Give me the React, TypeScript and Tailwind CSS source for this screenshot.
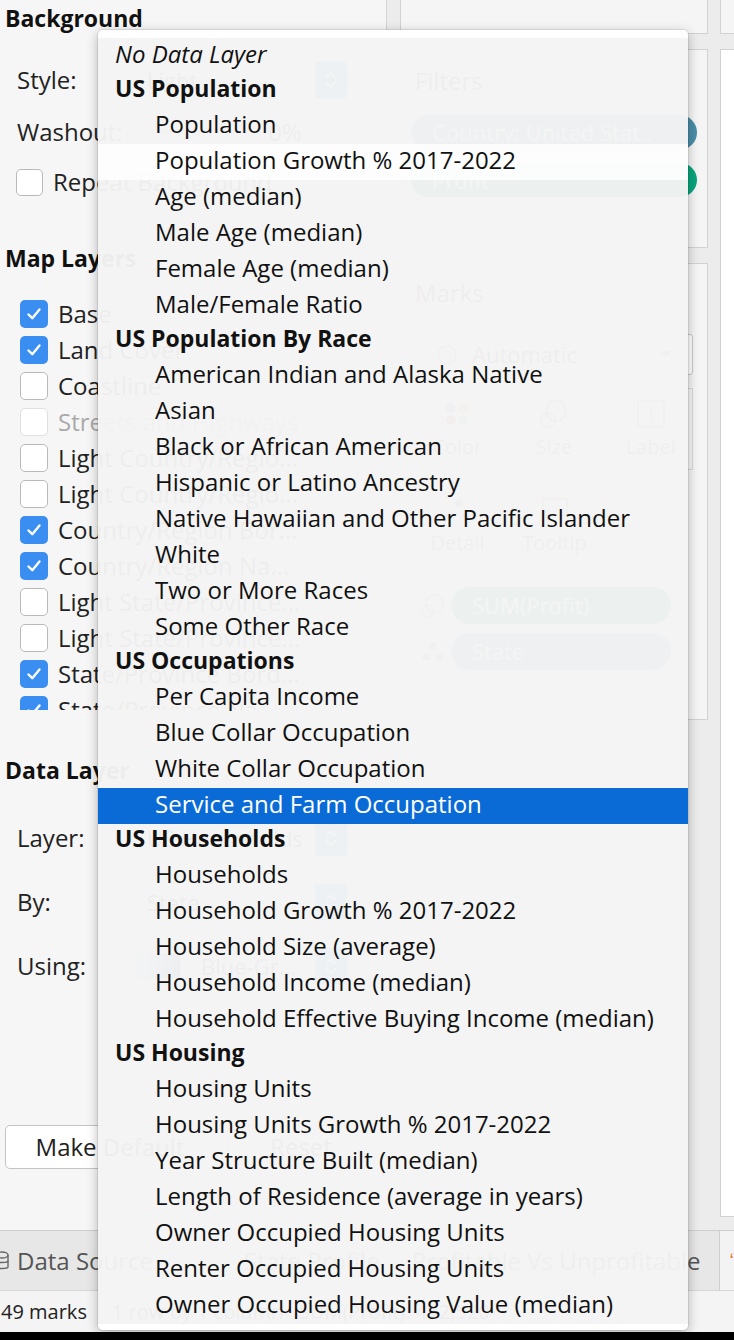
import React from "react";

type Row = { t: string; k: "none" | "h" | "i"; hl?: boolean; hover?: boolean };

const rows: Row[] = [
  { t: "No Data Layer", k: "none" },
  { t: "US Population", k: "h" },
  { t: "Population", k: "i" },
  { t: "Population Growth % 2017-2022", k: "i", hover: true },
  { t: "Age (median)", k: "i" },
  { t: "Male Age (median)", k: "i" },
  { t: "Female Age (median)", k: "i" },
  { t: "Male/Female Ratio", k: "i" },
  { t: "US Population By Race", k: "h" },
  { t: "American Indian and Alaska Native", k: "i" },
  { t: "Asian", k: "i" },
  { t: "Black or African American", k: "i" },
  { t: "Hispanic or Latino Ancestry", k: "i" },
  { t: "Native Hawaiian and Other Pacific Islander", k: "i" },
  { t: "White", k: "i" },
  { t: "Two or More Races", k: "i" },
  { t: "Some Other Race", k: "i" },
  { t: "US Occupations", k: "h" },
  { t: "Per Capita Income", k: "i" },
  { t: "Blue Collar Occupation", k: "i" },
  { t: "White Collar Occupation", k: "i" },
  { t: "Service and Farm Occupation", k: "i", hl: true },
  { t: "US Households", k: "h" },
  { t: "Households", k: "i" },
  { t: "Household Growth % 2017-2022", k: "i" },
  { t: "Household Size (average)", k: "i" },
  { t: "Household Income (median)", k: "i" },
  { t: "Household Effective Buying Income (median)", k: "i" },
  { t: "US Housing", k: "h" },
  { t: "Housing Units", k: "i" },
  { t: "Housing Units Growth % 2017-2022", k: "i" },
  { t: "Year Structure Built (median)", k: "i" },
  { t: "Length of Residence (average in years)", k: "i" },
  { t: "Owner Occupied Housing Units", k: "i" },
  { t: "Renter Occupied Housing Units", k: "i" },
  { t: "Owner Occupied Housing Value (median)", k: "i" },
];

const layers: { t: string; c: boolean; d?: boolean }[] = [
  { t: "Base", c: true },
  { t: "Land Cover", c: true },
  { t: "Coastline", c: false },
  { t: "Streets and Highways", c: false, d: true },
  { t: "Light Country/Regio...", c: false },
  { t: "Light Country/Regio...", c: false },
  { t: "Country/Region Bor...", c: true },
  { t: "Country/Region Na...", c: true },
  { t: "Light State/Province...", c: false },
  { t: "Light State/Province...", c: false },
  { t: "State/Province Bord...", c: true },
  { t: "State/Province Na...", c: true },
];

function Checkbox({ checked, disabled, size = 28 }: { checked: boolean; disabled?: boolean; size?: number }) {
  if (checked) {
    return (
      <div
        className="shrink-0 rounded-[5px] bg-[#3a8ef2] flex items-center justify-center"
        style={{ width: size, height: size }}
      >
        <svg width="18" height="18" viewBox="0 0 18 18" fill="none">
          <path d="M3.5 9.5 L7.3 13.2 L14.5 4.5" stroke="white" strokeWidth="2.4" strokeLinecap="round" strokeLinejoin="round" />
        </svg>
      </div>
    );
  }
  return (
    <div
      className={`shrink-0 rounded-[5px] bg-white border ${disabled ? "border-[#e0e0e0] bg-[#fafafa]" : "border-[#b9b9b9]"}`}
      style={{ width: size, height: size }}
    />
  );
}

function Popup({ text, swatch }: { text: string; swatch?: boolean }) {
  return (
    <div className="w-[220px] h-[38px] flex rounded-[5px] border border-[#c9c9c9] bg-white overflow-hidden">
      <div className="flex-1 min-w-0 flex items-center pl-[8px] gap-[10px] text-[22px] text-[#222] overflow-hidden whitespace-nowrap">
        {swatch ? (
          <div className="w-[44px] h-[26px] shrink-0 border border-[#bbb] bg-gradient-to-r from-[#dbe9f6] to-[#1f5a9e]" />
        ) : null}
        <span className="pl-[10px] truncate">{text}</span>
      </div>
      <div className="w-[32px] shrink-0 bg-[#3d8ff5] flex items-center justify-center">
        <svg width="12" height="22" viewBox="0 0 12 22" fill="none">
          <path d="M2 8 L6 4 L10 8" stroke="white" strokeWidth="2" strokeLinecap="round" strokeLinejoin="round" />
          <path d="M2 14 L6 18 L10 14" stroke="white" strokeWidth="2" strokeLinecap="round" strokeLinejoin="round" />
        </svg>
      </div>
    </div>
  );
}

function SettingRow({ label, children }: { label: string; children: React.ReactNode }) {
  return (
    <div className="h-[40px] flex items-center pl-[17px] shrink-0">
      <div className="w-[111px] shrink-0 text-[24px] text-[#222] leading-[40px]">{label}</div>
      {children}
    </div>
  );
}

function LeftPanel() {
  return (
    <div className="w-[387px] shrink-0 bg-[#f6f6f6] border-r border-[#d4d4d4] flex flex-col">
      <div className="h-[36px] pl-[5px] text-[23px] font-bold leading-[36px] text-[#111] shrink-0">Background</div>
      <div className="h-[24px] shrink-0" />
      <SettingRow label="Style:">
        <Popup text="Light" />
      </SettingRow>
      <div className="h-[12px] shrink-0" />
      <SettingRow label="Washout:">
        <div className="w-[120px] h-[4px] rounded-full bg-[#c9c9c9] relative">
          <div className="absolute -left-[2px] -top-[9px] w-[22px] h-[22px] rounded-full bg-white border border-[#bdbdbd]" />
        </div>
        <div className="ml-[20px] text-[24px] text-[#222]">0%</div>
      </SettingRow>
      <div className="h-[16px] shrink-0" />
      <div className="h-[28px] flex items-center pl-[16px] gap-[10px] shrink-0">
        <Checkbox checked={false} size={27} />
        <span className="text-[24px] text-[#222] whitespace-nowrap">Repeat Background</span>
      </div>
      <div className="h-[44px] shrink-0" />
      <div className="h-[36px] pl-[5px] text-[23px] font-bold leading-[36px] text-[#111] shrink-0">Map Layers</div>
      <div className="h-[20px] shrink-0" />
      <div className="h-[414px] overflow-hidden shrink-0">
        {layers.map((l, i) => (
          <div key={i} className="h-[36px] flex items-center pl-[20px] gap-[10px]">
            <Checkbox checked={l.c} disabled={l.d} />
            <span className={`text-[24px] whitespace-nowrap ${l.d ? "text-[#a9a9a9]" : "text-[#222]"}`}>{l.t}</span>
          </div>
        ))}
      </div>
      <div className="h-[42px] shrink-0" />
      <div className="h-[36px] pl-[5px] text-[23px] font-bold leading-[36px] text-[#111] shrink-0">Data Layer</div>
      <div className="h-[30px] shrink-0" />
      <SettingRow label="Layer:">
        <Popup text="US Households" />
      </SettingRow>
      <div className="h-[24px] shrink-0" />
      <SettingRow label="By:">
        <Popup text="State" />
      </SettingRow>
      <div className="h-[24px] shrink-0" />
      <SettingRow label="Using:">
        <Popup text="Blue-Gr..." swatch />
      </SettingRow>
      <div className="h-[139px] shrink-0" />
      <div className="h-[44px] flex pl-[5px] gap-[12px] shrink-0">
        <div className="w-[210px] h-[44px] rounded-[5px] border border-[#c4c4c4] bg-white flex items-center justify-center text-[24px] text-[#222]">
          Make Default
        </div>
        <div className="w-[148px] h-[44px] rounded-[5px] border border-[#c4c4c4] bg-white flex items-center justify-center text-[24px] text-[#222]">
          Reset
        </div>
      </div>
    </div>
  );
}

function Pill({ text, color }: { text: string; color: string }) {
  return (
    <div className={`h-full rounded-full ${color} flex items-center pl-[21px] text-[22px] text-white whitespace-nowrap overflow-hidden`}>
      {text}
    </div>
  );
}

function MarkButton({ label, icon }: { label: string; icon: React.ReactNode }) {
  return (
    <div className="w-[85px] h-full border border-[#dadada] bg-[#f7f7f7] flex flex-col items-center justify-center gap-[4px]">
      <div className="h-[32px] flex items-center justify-center">{icon}</div>
      <div className="text-[20px] text-[#555] leading-[26px]">{label}</div>
    </div>
  );
}

function SizeIcon({ s = 30 }: { s?: number }) {
  return (
    <svg width={s} height={s} viewBox="0 0 30 30">
      <circle cx="17" cy="12" r="10" fill="none" stroke="#777" strokeWidth="1.5" />
      <circle cx="9" cy="21" r="7" fill="none" stroke="#777" strokeWidth="1.5" />
    </svg>
  );
}

function DetailIcon({ s = 28 }: { s?: number }) {
  return (
    <svg width={s} height={s} viewBox="0 0 28 28">
      <circle cx="14" cy="7" r="4" fill="#777" />
      <circle cx="6" cy="20" r="4" fill="#777" />
      <circle cx="22" cy="20" r="4" fill="#777" />
    </svg>
  );
}

function MiddleColumn() {
  return (
    <div className="w-[308px] shrink-0 flex flex-col">
      <div className="h-[34px] shrink-0 bg-[#f5f5f5] border-x border-b border-[#d2d2d2]" />
      <div className="h-[15px] shrink-0" />
      <div className="h-[199px] shrink-0 bg-[#f5f5f5] border border-[#d2d2d2] px-[10px] flex flex-col">
        <div className="h-[30px] mt-[16px] pl-[4px] text-[24px] leading-[30px] text-[#333]">Filters</div>
        <div className="h-[19px]" />
        <div className="h-[35px]">
          <Pill text="Country: United Stat.." color="bg-[#4a8da8]" />
        </div>
        <div className="h-[13px]" />
        <div className="h-[34px]">
          <Pill text="Profit" color="bg-[#07a57c]" />
        </div>
      </div>
      <div className="h-[15px] shrink-0" />
      <div className="h-[457px] shrink-0 bg-[#f5f5f5] border border-[#d2d2d2] px-[14px] flex flex-col">
        <div className="h-[30px] mt-[14px] text-[24px] leading-[30px] text-[#333]">Marks</div>
        <div className="h-[26px]" />
        <div className="h-[41px] border border-[#c8c8c8] rounded-[3px] bg-white flex items-center px-[20px] gap-[14px]">
          <svg width="22" height="22" viewBox="0 0 22 22"><circle cx="11" cy="11" r="9" fill="none" stroke="#777" strokeWidth="1.5" /></svg>
          <span className="flex-1 text-[22px] text-[#333]">Automatic</span>
          <svg width="12" height="8" viewBox="0 0 12 8"><path d="M0 0 L12 0 L6 7 Z" fill="#777" /></svg>
        </div>
        <div className="h-[13px]" />
        <div className="h-[82px] flex gap-[12px]">
          <MarkButton
            label="Color"
            icon={
              <svg width="26" height="26" viewBox="0 0 26 26">
                <circle cx="7" cy="7" r="5" fill="#4e79a7" />
                <circle cx="19" cy="7" r="5" fill="#f28e2b" />
                <circle cx="7" cy="19" r="5" fill="#e15759" />
                <circle cx="19" cy="19" r="5" fill="#76b7b2" />
              </svg>
            }
          />
          <MarkButton label="Size" icon={<SizeIcon />} />
          <MarkButton
            label="Label"
            icon={
              <svg width="28" height="28" viewBox="0 0 28 28">
                <rect x="1" y="1" width="26" height="26" fill="none" stroke="#777" strokeWidth="1.5" />
                <text x="14" y="20" textAnchor="middle" fontSize="16" fill="#777" fontFamily="Liberation Serif, serif">T</text>
              </svg>
            }
          />
        </div>
        <div className="h-[15px]" />
        <div className="h-[80px] flex gap-[12px]">
          <MarkButton label="Detail" icon={<DetailIcon />} />
          <MarkButton
            label="Tooltip"
            icon={
              <svg width="28" height="26" viewBox="0 0 28 26">
                <path d="M2 2 H26 V18 H12 L6 24 V18 H2 Z" fill="none" stroke="#777" strokeWidth="1.5" />
              </svg>
            }
          />
        </div>
        <div className="h-[22px]" />
        <div className="h-[37px] flex items-center">
          <div className="w-[36px] flex justify-center">
            <SizeIcon s={26} />
          </div>
          <div className="w-[220px] h-full">
            <Pill text="SUM(Profit)" color="bg-[#07a57c]" />
          </div>
        </div>
        <div className="h-[9px]" />
        <div className="h-[37px] flex items-center">
          <div className="w-[36px] flex justify-center">
            <DetailIcon s={24} />
          </div>
          <div className="w-[220px] h-full">
            <Pill text="State" color="bg-[#4a8da8]" />
          </div>
        </div>
      </div>
    </div>
  );
}

function RightColumn() {
  return (
    <div className="flex-1 flex flex-col">
      <div className="h-[34px] shrink-0 bg-[#f5f5f5] border-l border-b border-[#d2d2d2]" />
      <div className="h-[15px] shrink-0" />
      <div className="h-[1168px] shrink-0 bg-white border-l border-y border-[#d2d2d2]" />
    </div>
  );
}

function TabBar() {
  return (
    <div className="h-[60px] shrink-0 bg-[#e7e7e7] border-t border-[#cfcfcf] flex">
      <div className="w-[228px] shrink-0 flex items-center border-r border-[#d0d0d0] relative">
        <svg className="absolute -left-[5px] top-[20px]" width="14" height="20" viewBox="0 0 14 20" fill="none">
          <ellipse cx="7" cy="4" rx="6" ry="3" stroke="#666" strokeWidth="1.4" />
          <path d="M1 4 V16 C1 18 13 18 13 16 V4" stroke="#666" strokeWidth="1.4" />
          <path d="M1 10 C1 12 13 12 13 10" stroke="#666" strokeWidth="1.4" />
        </svg>
        <span className="pl-[17px] text-[24px] text-[#555] whitespace-nowrap">Data Source</span>
      </div>
      <div className="w-[172px] shrink-0 flex items-center border-r border-[#d0d0d0] pl-[16px] text-[24px] text-[#555] whitespace-nowrap overflow-hidden">
        State Profile
      </div>
      <div className="w-[320px] shrink-0 flex items-center border-r border-[#cfcfcf] pl-[12px] text-[24px] text-[#555] whitespace-nowrap overflow-hidden">
        Profitable Vs Unprofitable
      </div>
      <div className="flex-1 bg-[#f3f3f3] flex items-center justify-end">
        <span className="text-[20px] text-[#e8762c] leading-none">ʻ</span>
      </div>
    </div>
  );
}

function StatusBar() {
  return (
    <div className="h-[42px] shrink-0 bg-[#f4f4f4] border-t border-[#d6d6d6] flex items-center text-[20px] text-[#222] whitespace-nowrap">
      <span className="pl-[1px] w-[112px] shrink-0">49 marks</span>
      <span>1 row by 1 column&nbsp;&nbsp;&nbsp;SUM(Profit): 412,520</span>
    </div>
  );
}

function Menu() {
  return (
    <div className="absolute left-[98px] top-[30px] w-[590px] flex flex-col rounded-[5px] overflow-hidden shadow-[0_0_0_1px_rgba(0,0,0,0.07),0_3px_12px_rgba(0,0,0,0.28)]">
      <div className="h-[8px] bg-white" />
      <div className="bg-[#f4f4f4]/[0.97] flex flex-col">
        {rows.map((r, i) => {
          if (r.k === "none") {
            return (
              <div key={i} className="h-[36px] pl-[17px] text-[24px] italic leading-[31px] text-[#111] whitespace-nowrap">
                {r.t}
              </div>
            );
          }
          if (r.k === "h") {
            return (
              <div key={i} className="h-[34px] pl-[17px] text-[23px] font-bold leading-[29px] text-[#111] whitespace-nowrap">
                {r.t}
              </div>
            );
          }
          return (
            <div
              key={i}
              className={`h-[36px] pl-[57px] text-[24px] leading-[31px] whitespace-nowrap ${
                r.hl ? "bg-[#0a6bd7] text-white" : r.hover ? "bg-white/80 text-[#111]" : "text-[#111]"
              }`}
            >
              {r.t}
            </div>
          );
        })}
      </div>
      <div className="h-[6px] bg-white" />
    </div>
  );
}

export default function App() {
  return (
    <div className="relative w-[734px] h-[1340px] overflow-hidden bg-[#ececec] font-['Open_Sans',sans-serif] flex flex-col">
      <div className="flex h-[1230px] shrink-0">
        <LeftPanel />
        <div className="w-[13px] shrink-0" />
        <MiddleColumn />
        <div className="w-[12px] shrink-0" />
        <RightColumn />
      </div>
      <TabBar />
      <StatusBar />
      <div className="h-[8px] bg-black shrink-0" />
      <Menu />
    </div>
  );
}
